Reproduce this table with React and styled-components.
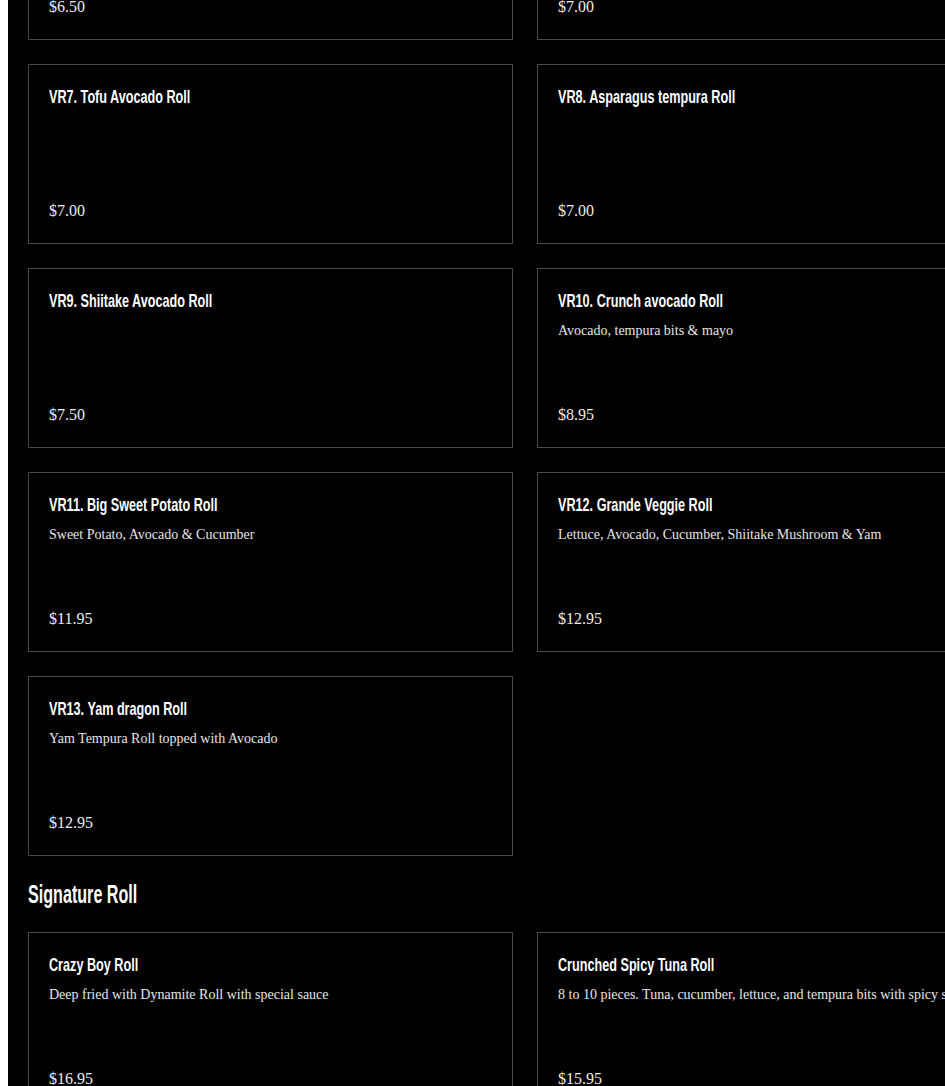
import styled, { createGlobalStyle } from 'styled-components';

const GlobalStyle = createGlobalStyle`
  html, body {
    overflow: hidden;
  }
  body {
    margin: 0 0 0 8px;
    background: #ffffff;
  }
`

const earlier = [
  { name: 'VR5. Avocado Roll', price: '$6.50' },
  { name: 'VR6. Oshinko Roll', price: '$7.00' },
]

const veggie = [
  { name: 'VR7. Tofu Avocado Roll', price: '$7.00' },
  { name: 'VR8. Asparagus tempura Roll', price: '$7.00' },
  { name: 'VR9. Shiitake Avocado Roll', price: '$7.50' },
  { name: 'VR10. Crunch avocado Roll', desc: 'Avocado, tempura bits & mayo', price: '$8.95' },
  { name: 'VR11. Big Sweet Potato Roll', desc: 'Sweet Potato, Avocado & Cucumber', price: '$11.95' },
  { name: 'VR12. Grande Veggie Roll', desc: 'Lettuce, Avocado, Cucumber, Shiitake Mushroom & Yam', price: '$12.95' },
  { name: 'VR13. Yam dragon Roll', desc: 'Yam Tempura Roll topped with Avocado', price: '$12.95' },
]

const signature = [
  { name: 'Crazy Boy Roll', desc: 'Deep fried with Dynamite Roll with special sauce', price: '$16.95' },
  { name: 'Crunched Spicy Tuna Roll', desc: '8 to 10 pieces. Tuna, cucumber, lettuce, and tempura bits with spicy sauce', price: '$15.95' },
]

function MenuItem({ item }) {
  return (
    <Card>
      <Title>{item.name}</Title>
      {item.desc && <Desc>{item.desc}</Desc>}
      <Price>{item.price}</Price>
    </Card>
  )
}

export default function App() {
  return (
    <>
      <GlobalStyle />
      <Page>
        <Scrolled>
          <Grid>
            {earlier.concat(veggie).map((obj) => (
              <MenuItem key={obj.name} item={obj} />
            ))}
          </Grid>
          <SectionTitle>Signature Roll</SectionTitle>
          <Grid>
            {signature.map((obj) => (
              <MenuItem key={obj.name} item={obj} />
            ))}
          </Grid>
        </Scrolled>
      </Page>
    </>
  )
}

const Page = styled.div`
  width: 1034px;
  min-height: 100vh;
  background-color: #000;
  padding: 0 20px 40px;
  box-sizing: border-box;
`

// the screenshot is taken part way down the menu
const Scrolled = styled.div`
  margin-top: -140px;
`

const Grid = styled.div`
  display: grid;
  grid-template-columns: 485px 485px;
  gap: 24px;
`

const Card = styled.div`
  height: 180px;
  box-sizing: border-box;
  border: 1px solid #4a4a4a;
  padding: 20px 20px 21px;
  display: flex;
  flex-direction: column;
  color: #f2f2f2;
`

// no condensed face installed, so the bold sans is narrowed by hand
const Title = styled.h3`
  margin: 0;
  font-family: "Liberation Sans", Arial, sans-serif;
  font-weight: bold;
  font-size: 19px;
  line-height: 24px;
  color: #ffffff;
  white-space: nowrap;
  transform: scaleX(0.665);
  transform-origin: left center;
`

const Desc = styled.p`
  margin: 8px 0 0;
  font-family: "Liberation Serif", serif;
  font-size: 14px;
  line-height: 20px;
  color: #e6e6e6;
  white-space: nowrap;
`

const Price = styled.p`
  margin: auto 0 0;
  font-family: "Liberation Serif", serif;
  font-size: 16px;
  line-height: 22px;
  color: #eeeeee;
`

const SectionTitle = styled.h2`
  margin: 22px 0;
  font-family: "Liberation Sans", Arial, sans-serif;
  font-weight: bold;
  font-size: 25px;
  line-height: 32px;
  color: #ffffff;
  white-space: nowrap;
  transform: scaleX(0.645);
  transform-origin: left center;
`
